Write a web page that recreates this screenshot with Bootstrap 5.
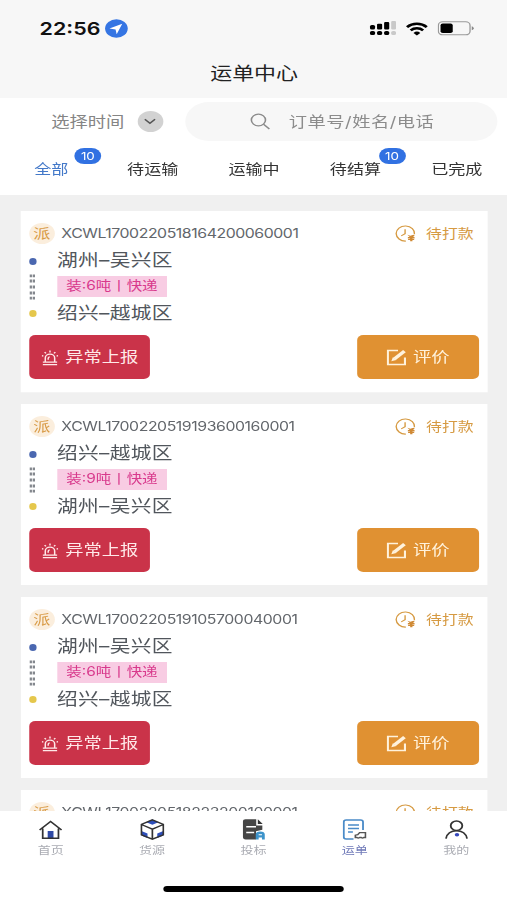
<!DOCTYPE html>
<html lang="zh-CN">
<head>
<meta charset="utf-8">
<meta name="viewport" content="width=device-width, initial-scale=1">
<title>运单中心</title>
<link href="https://cdn.jsdelivr.net/npm/bootstrap@5.3.0/dist/css/bootstrap.min.css" rel="stylesheet">
<style>
html,body{height:900px;overflow:hidden;background:#f0f0f0}
body{font-family:Inter,"Noto Sans CJK SC",sans-serif;color:#333}
.screen{width:415.92px;height:900px;transform:scaleX(1.219);transform-origin:0 0;line-height:1}
.screen svg{display:block;flex:none}
.top-area{height:97.5px;background:#f7f7f7}
.status{height:57px;padding:0 27px 0 32.5px}
.clock{font-size:17.6px;font-weight:600;color:#111}
.title{font-size:18px;height:34px;color:#222;padding-left:1px}
.filter{height:97.5px;background:#fff}
.filter-row{height:48px;padding:4.5px 7.5px 4.5px 42px}
.pick{font-size:15px;color:#858585}
.chev{width:21px;height:21px;background:#d2d2d2}
.search{width:256px;height:39px;background:#f7f7f7;color:#8c8c8c;font-size:15px;letter-spacing:.4px;padding-left:53px;gap:14.5px}
.tabs .nav-link{font-size:14px;line-height:20px;padding:13.5px 0 0 1px;color:#333}
.tabs .nav-link.active{color:#4479c9}
.count{left:calc(50% + 19.5px);top:2px;width:22px;height:16px;font-size:11px;font-weight:400;line-height:16px;padding:0;background:#3171e2}
.list{height:616px;padding:15.5px 15.9px 0 16.5px;gap:12px;overflow:hidden}
.order{flex:none;height:181px;background:#fff;padding:11px 7.5px 12px 7.3px}
.head{height:23px}
.pai{width:21px;height:21px;background:#fbeedd;color:#d89a45;font-size:14px}
.num{font-size:13px;letter-spacing:-.36px;color:#62666b;margin-left:5.5px;white-space:nowrap}
.state{font-size:13px;color:#d69a42;padding-right:4px;gap:9px}
.route{height:82px;padding-top:2.5px}
.rail{width:6px;margin-right:17px;padding:10.5px 0 10px}
.dot{width:6.5px;height:7px}
.place{font-size:17px;line-height:27px;color:#51565c;letter-spacing:.25px;white-space:nowrap}
.load{width:90px;height:21px;background:#f8cce3;color:#d8398c;font-size:12.7px;margin:2px 0 3px;white-space:nowrap}
.act{width:99.5px;height:44px;border:0;border-radius:5px;font-size:15px;color:#fff;padding:1px 0 0;margin-top:8.5px;--bs-btn-border-width:0}
.report{background:#ca3349;color:#ffe9e9;gap:6px}
.rate{background:#e09132;color:#fff2dc;gap:5px}
.bottom{height:89px;background:#fff}
.bottom .nav-link{padding:7.5px 0 0;font-size:10.7px;color:#aaacb3;height:60px;gap:6px}
.bottom .nav-link.active{color:#6f79b8}
.homebar{width:148px;height:6px;background:#000;margin:15px auto 0}
</style>
</head>
<body>
<svg width="0" height="0" class="position-absolute" aria-hidden="true">
<symbol id="clock" viewBox="0 0 18 18"><g fill="none" stroke="#d69a42" stroke-width="1.2"><path d="M9.5 17A8 8 0 1 1 17 9.800"/><path d="M8.800 4.500v4.800l-3.400 2.200"/></g><path d="M10.800 10.300l2.600 1.200 2.600-1.200 1.200 1-1.700 1.500h1.500v1.400h-1.800v.6h1.500v1.200h-1.500V17.300h-2V16H11.400v-1.200h1.600v-.6H11.200V12.800h1.600z" fill="#d08a35"/></symbol>
<symbol id="siren" viewBox="0 0 16 18"><g fill="none" stroke="#ffe9e9" stroke-width="1.400"><path d="M3.600 13V9a4.400 4.400 0 0 1 8.800 0v4M1.300 13.600h13.400M1.300 16.600h13.400M8 .5v2.200M3 2.200l1.200 1.600M13 2.200l-1.200 1.600M.3 6.300l1.500.5M15.700 6.300l-1.500.5M6.300 11V9.500q0-1.500 1.500-1.700"/></g></symbol>
<symbol id="pen" viewBox="0 0 17 17"><g fill="none" stroke="#fff2dc" stroke-width="1.700"><path d="M9.500 1.500H1.200v14h14V8.500"/><path d="M6.600 9.800L14.800 2.200" stroke-width="3.200"/></g><path d="M5.300 8.300l-1.300 4 4.200-1.200z" fill="#fff2dc"/></symbol>
<symbol id="dashes" viewBox="0 0 5 26"><path d="M.3 1.800h1.900M2.800 1.800h1.900M.3 7h1.900M2.800 7h1.900M.3 13h1.900M2.800 13h1.900M.3 19h1.900M2.800 19h1.900M.3 24.200h1.900M2.800 24.200h1.900" stroke="#83878d" stroke-width="2.800"/></symbol>
</svg>
<div class="screen d-flex flex-column">
<header class="top-area">
  <div class="status d-flex align-items-center justify-content-between">
    <div class="d-flex align-items-center" style="gap:3.500px"><span class="clock">22:56</span>
      <svg width="19" height="19" viewBox="0 0 19 19"><circle cx="9.500" cy="9.500" r="9.300" fill="#3575e3"/><path d="M14.300 4.800L3.800 9.400l5 1 .9 4.900z" fill="#fff"/></svg></div>
    <div class="d-flex align-items-center" style="gap:8px">
      <svg width="22" height="16" viewBox="0 0 22 16"><g fill="#000"><rect x="0.500" y="4" width="4.200" height="4.500" rx="1.500"/><rect x="6.300" y="2.800" width="4.200" height="5.700" rx="1"/><rect x="12.100" y="1" width="4.200" height="7.500" rx="1"/><rect x="0.500" y="10" width="4.200" height="4" rx="1.500"/><rect x="6.300" y="10" width="4.200" height="4" rx="1.500"/><rect x="12.100" y="10" width="4.200" height="4" rx="1.500"/></g><g fill="#c9c9c9"><rect x="17.900" y="0" width="4" height="8.500" rx="1"/><rect x="17.900" y="10" width="4" height="4" rx="1.500"/></g></svg>
      <svg width="18" height="14" viewBox="0 0 18 14"><g fill="none" stroke="#000" stroke-width="2.400"><path d="M.9 5.100a11.600 11.600 0 0 1 16.200 0"/><path d="M3.900 8.300a7.300 7.300 0 0 1 10.200 0"/></g><path d="M9 13.600l-2.800-2.700a4 4 0 0 1 5.600 0z"/></svg>
      <svg width="30" height="15" viewBox="0 0 30 15"><rect x=".6" y=".8" width="26" height="13" rx="3.600" fill="none" stroke="#9a9a9a" stroke-width="1.100"/><rect x="2.400" y="2.600" width="10" height="9.400" rx="1.800"/><path d="M28 5.300q1.600.5 1.600 2t-1.600 2z" fill="#888"/></svg>
    </div>
  </div>
  <div class="title d-flex align-items-center justify-content-center">运单中心</div>
</header>
<section class="filter">
  <div class="filter-row d-flex align-items-center justify-content-between">
    <div class="d-flex align-items-center pick" style="gap:10.5px"><span>选择时间</span><span class="chev rounded-circle d-flex align-items-center justify-content-center"><svg width="10" height="7" viewBox="0 0 10 7"><path d="M.8 1.300L5 5.300l4.200-4" fill="none" stroke="#555" stroke-width="1.300"/></svg></span></div>
    <div class="search rounded-pill d-flex align-items-center"><svg width="17" height="17" viewBox="0 0 17 17"><g fill="none" stroke="#8b8b8b" stroke-width="1.300"><circle cx="7" cy="7" r="5.800"/><path d="M11.200 11.200l4.800 4.800"/></g></svg><span>订单号/姓名/电话</span></div>
  </div>
  <nav class="tabs nav row row-cols-5 g-0 text-center">
    <div class="col position-relative"><a class="nav-link active">全部</a><span class="count badge rounded-pill position-absolute">10</span></div>
    <div class="col"><a class="nav-link">待运输</a></div>
    <div class="col"><a class="nav-link">运输中</a></div>
    <div class="col position-relative"><a class="nav-link">待结算</a><span class="count badge rounded-pill position-absolute">10</span></div>
    <div class="col"><a class="nav-link">已完成</a></div>
  </nav>
</section>
<main class="list d-flex flex-column">
  <article class="order">
    <div class="head d-flex align-items-center"><span class="pai rounded-circle d-flex align-items-center justify-content-center">派</span><span class="num">XCWL1700220518164200060001</span><span class="state ms-auto d-flex align-items-center"><svg width="17" height="17"><use href="#clock"/></svg>待打款</span></div>
    <div class="route d-flex"><div class="rail d-flex flex-column align-items-center justify-content-between"><i class="dot rounded-circle" style="background:#4a67b0"></i><svg width="5" height="26"><use href="#dashes"/></svg><i class="dot rounded-circle" style="background:#e5c74c"></i></div>
      <div><div class="place">湖州–吴兴区</div><div class="load d-flex align-items-center justify-content-center">装:6吨丨快递</div><div class="place">绍兴–越城区</div></div></div>
    <div class="d-flex justify-content-between"><button class="act btn report d-flex align-items-center justify-content-center"><svg width="14" height="16"><use href="#siren"/></svg>异常上报</button><button class="act btn rate d-flex align-items-center justify-content-center"><svg width="17" height="17"><use href="#pen"/></svg>评价</button></div>
  </article>
  <article class="order">
    <div class="head d-flex align-items-center"><span class="pai rounded-circle d-flex align-items-center justify-content-center">派</span><span class="num">XCWL1700220519193600160001</span><span class="state ms-auto d-flex align-items-center"><svg width="17" height="17"><use href="#clock"/></svg>待打款</span></div>
    <div class="route d-flex"><div class="rail d-flex flex-column align-items-center justify-content-between"><i class="dot rounded-circle" style="background:#4a67b0"></i><svg width="5" height="26"><use href="#dashes"/></svg><i class="dot rounded-circle" style="background:#e5c74c"></i></div>
      <div><div class="place">绍兴–越城区</div><div class="load d-flex align-items-center justify-content-center">装:9吨丨快递</div><div class="place">湖州–吴兴区</div></div></div>
    <div class="d-flex justify-content-between"><button class="act btn report d-flex align-items-center justify-content-center"><svg width="14" height="16"><use href="#siren"/></svg>异常上报</button><button class="act btn rate d-flex align-items-center justify-content-center"><svg width="17" height="17"><use href="#pen"/></svg>评价</button></div>
  </article>
  <article class="order">
    <div class="head d-flex align-items-center"><span class="pai rounded-circle d-flex align-items-center justify-content-center">派</span><span class="num">XCWL1700220519105700040001</span><span class="state ms-auto d-flex align-items-center"><svg width="17" height="17"><use href="#clock"/></svg>待打款</span></div>
    <div class="route d-flex"><div class="rail d-flex flex-column align-items-center justify-content-between"><i class="dot rounded-circle" style="background:#4a67b0"></i><svg width="5" height="26"><use href="#dashes"/></svg><i class="dot rounded-circle" style="background:#e5c74c"></i></div>
      <div><div class="place">湖州–吴兴区</div><div class="load d-flex align-items-center justify-content-center">装:6吨丨快递</div><div class="place">绍兴–越城区</div></div></div>
    <div class="d-flex justify-content-between"><button class="act btn report d-flex align-items-center justify-content-center"><svg width="14" height="16"><use href="#siren"/></svg>异常上报</button><button class="act btn rate d-flex align-items-center justify-content-center"><svg width="17" height="17"><use href="#pen"/></svg>评价</button></div>
  </article>
  <article class="order">
    <div class="head d-flex align-items-center"><span class="pai rounded-circle d-flex align-items-center justify-content-center">派</span><span class="num">XCWL1700220518223200100001</span><span class="state ms-auto d-flex align-items-center"><svg width="17" height="17"><use href="#clock"/></svg>待打款</span></div>
  </article>
</main>
<footer class="bottom">
  <nav class="nav row row-cols-5 g-0">
    <a class="col nav-link d-flex flex-column align-items-center"><svg width="19" height="21" viewBox="0 0 20 21"><path d="M7.500 12h5v7.500h-5z" fill="#2f49a5"/><path d="M3.200 9.500v10.200h13.600V9.500M.5 11L10 2l9.500 9" fill="none" stroke="#333" stroke-width="1.500"/></svg>首页</a>
    <a class="col nav-link d-flex flex-column align-items-center"><svg width="20" height="21" viewBox="0 0 20 21"><path d="M10 .5l5 2.700-5 2.500-5-2.500zM1 12l5 2.500v4.500L1 16.500zM19 12l-5 2.500v4.500l5-2.500z" fill="#2e4fbb"/><path d="M10 .9l9 4.600v10.300l-9 4.400-9-4.400V5.500zM1 5.500l9 4.600 9-4.600M10 10v10" fill="none" stroke="#333" stroke-width="1.400"/></svg>货源</a>
    <a class="col nav-link d-flex flex-column align-items-center"><svg width="20" height="21" viewBox="0 0 20 21"><path d="M3.500.2h8.700v6.300h5v4.300l-5.200 1.500V20.500H3.500A2.200 2.200 0 0 1 1.300 18.500V2.400A2.200 2.200 0 0 1 3.500.2z" fill="#454545"/><path d="M13.500.3l4 4.700h-4z" fill="#333"/><path d="M4 7.800h8M4 13.500h6.500" stroke="#fff" stroke-width="1.600"/><path d="M11.800 20.500v-5q0-3 3.700-3t3.700 3v5h-2.300v-2h-2.700v2z" fill="#3d93ca"/><path d="M14.200 15.700h2.700" stroke="#fff"/></svg>投标</a>
    <a class="col nav-link active d-flex flex-column align-items-center"><svg width="20" height="21" viewBox="0 0 20 21"><path d="M16.800 11V3a2 2 0 0 0-2-2H3a2 2 0 0 0-2 2v15a2 2 0 0 0 2 2h6M4.500 6h9M4.500 9.500h9M4.500 13h4" fill="none" stroke="#4a8bc8" stroke-width="1.500"/><path d="M10.500 18.500v-2.300l2-.5 1.500-2h4.800v4.800h-1.300q-1.100 1-2.200 0h-1.300q-1.100 1-2.200 0z" fill="#fff" stroke="#555" stroke-width="1.300"/></svg>运单</a>
    <a class="col nav-link d-flex flex-column align-items-center"><svg width="19" height="21" viewBox="0 0 20 21"><g fill="none" stroke="#333" stroke-width="1.600"><circle cx="10" cy="6.500" r="5"/><path d="M.9 20c.7-5 4.300-8.300 9.100-8.300s8.400 3.300 9.100 8.300"/></g><circle cx="10.400" cy="16" r="1.900" fill="#3547bb"/></svg>我的</a>
  </nav>
  <div class="homebar rounded-pill"></div>
</footer>
</div>
<script src="https://cdn.jsdelivr.net/npm/bootstrap@5.3.0/dist/js/bootstrap.bundle.min.js"></script>
</body>
</html>
